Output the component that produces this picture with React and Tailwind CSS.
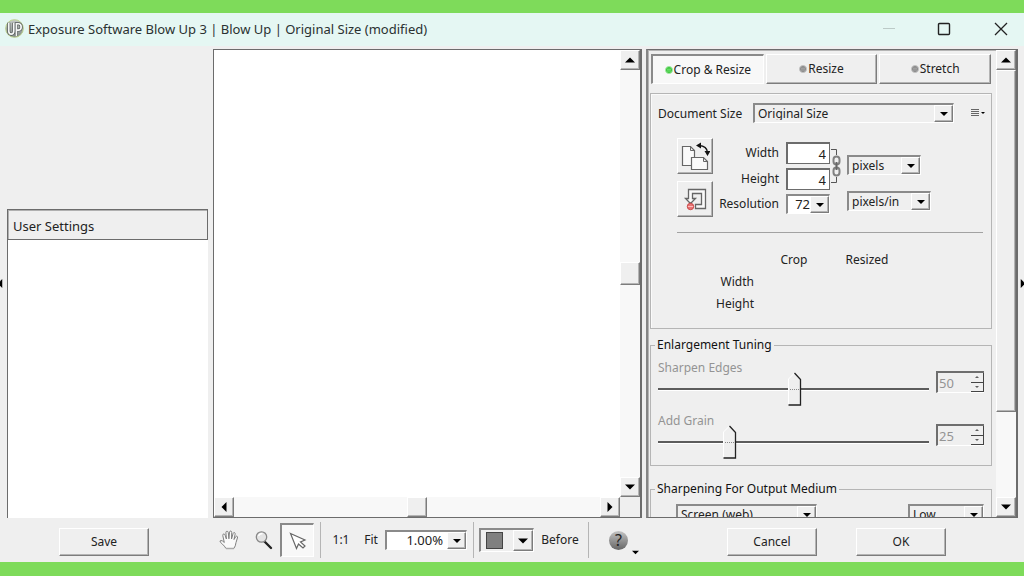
import { useState } from "react";

const raised = "bg-[#efefef] border border-t-white border-l-white border-r-[#7c7c7c] border-b-[#7c7c7c] shadow-[inset_-1px_-1px_0_#b4b4b4]";
const sunken = "border-t-2 border-l-2 border-r border-b border-t-[#8a8a8a] border-l-[#8a8a8a] border-r-white border-b-white";

const triangles = {
	up: "M6 3 L12 9 H0 Z",
	down: "M0 3 H12 L6 9 Z",
	left: "M9 0 V12 L3 6 Z",
	right: "M3 0 L9 6 L3 12 Z",
};

function Triangle({ dir = "down", className = "w-3 h-3" }) {
	return (
		<svg viewBox="0 0 12 12" className={className} aria-hidden="true">
			<path d={triangles[dir]} fill="#000" />
		</svg>
	);
}

function ArrowButton({ dir }) {
	return (
		<button aria-label={`Scroll ${dir}`} className={`w-5 h-5 shrink-0 flex items-center justify-center ${raised}`}>
			<Triangle dir={dir} className="w-[10px] h-[10px]" />
		</button>
	);
}

function DropDown({ label, options, className = "", textClass = "" }) {
	return (
		<div className={`relative flex h-5 ${sunken} ${className}`}>
			<select aria-label={label} className={`appearance-none bg-transparent w-full pl-[3px] leading-[17px] outline-none ${textClass}`}>
				{options.map((o) => (
					<option key={o}>{o}</option>
				))}
			</select>
			<span className={`absolute right-0 inset-y-0 w-[19px] flex items-center justify-center pointer-events-none ${raised}`}>
				<Triangle className="w-2 h-2" />
			</span>
		</div>
	);
}

function Combo({ id, label, value, className, inputClass = "" }) {
	return (
		<div className={`flex h-5 shrink-0 ${sunken} ${className}`}>
			<input id={id} aria-label={label} defaultValue={value} className={`min-w-0 flex-1 bg-white text-right text-[13px] leading-[17px] outline-none ${inputClass}`} />
			<button aria-label={`${label} presets`} className={`w-[19px] flex items-center justify-center ${raised}`}>
				<Triangle className="w-2 h-2" />
			</button>
		</div>
	);
}

function Tab({ label, active, onClick }) {
	return (
		<button
			role="tab"
			aria-selected={active}
			onClick={onClick}
			className={`flex-1 flex items-center justify-center gap-px ${active ? `bg-[#f8f8f8] pt-px ${sunken}` : raised}`}
		>
			<svg viewBox="0 0 8 8" className="w-2 h-2" aria-hidden="true">
				<circle cx="4" cy="4" r="3.5" fill={active ? "#35c435" : "#858585"} stroke={active ? "#a5e8a5" : "#c4c4c4"} />
				<path d="M2 3.2h4M2 5h4" stroke={active ? "#8df08d" : "#b5b5b5"} strokeWidth=".8" />
			</svg>
			{label}
		</button>
	);
}

function TuningSlider({ label, value, percent }) {
	return (
		<div className="flex h-[53px] pl-[7px] pr-[7px] text-[#949494]">
			<div className="flex-1">
				<label htmlFor={label} className="block h-[18px] leading-[18px]">{label}</label>
				<div className="relative h-[34px] -mt-[5px] flex items-center">
					<div className="w-full h-[3px] border-t-2 border-[#5c5c5c] border-b border-b-white"></div>
					<svg viewBox="0 0 14 34" className="absolute top-0 w-[14px] h-[34px]" style={{ left: `${percent}%` }} aria-hidden="true">
						<path d="M.5 33V7L6.5.5l6 6.5v26z" fill="#efefef" />
						<path d="M.5 33V7L6.5 1" fill="none" stroke="#fff" />
						<path d="M6.5 1l6 6.500v25.500H.5" fill="none" stroke="#222" strokeWidth="1.300" />
						<path d="M2 17.500h9" stroke="#888" strokeDasharray="1 1" />
					</svg>
					<input id={label} type="range" min="0" max="100" defaultValue={percent} disabled className="absolute inset-0 w-full h-full opacity-0" />
				</div>
			</div>
			<div className="flex w-12 h-[22px] ml-[7px] mt-3 border-t-2 border-l-2 border-[#6e6e6e] border-b border-b-white">
				<input aria-label={`${label} value`} defaultValue={value} disabled className="min-w-0 flex-1 pl-px text-[13px] leading-[18px]" />
				<div className="w-[13px] flex flex-col border-r border-[#444]">
					<button aria-label={`Increase ${label}`} disabled className="flex-1 flex items-center justify-center border-b border-[#444]">
						<Triangle dir="up" className="w-1 h-1 opacity-60" />
					</button>
					<button aria-label={`Decrease ${label}`} disabled className="flex-1 flex items-center justify-center border-b border-[#444]">
						<Triangle className="w-1 h-1 opacity-60" />
					</button>
				</div>
			</div>
		</div>
	);
}

function TitleBar() {
	return (
		<header className="h-[33px] shrink-0 flex items-center bg-[#e5f7f3] pl-[5px] pr-4 pb-[2px]">
			<svg viewBox="0 0 20 20" className="w-[19px] h-[19px]" aria-hidden="true">
				<defs>
					<linearGradient id="logo" x1="0" y1="0" x2="0" y2="1">
						<stop offset="0" stopColor="#c5cac8" />
						<stop offset="1" stopColor="#848c8a" />
					</linearGradient>
				</defs>
				<circle cx="10" cy="10" r="9.300" fill="url(#logo)" stroke="#b9cf86" />
				<path d="M4 4v9q0 3 2.600 3t2.600-3V4M12 18V5h2q3 0 3 3.300t-3 3.300h-2" fill="none" stroke="#4f5555" strokeWidth="3.200" />
				<path d="M4 4v9q0 3 2.600 3t2.600-3V4M12 18V5h2q3 0 3 3.300t-3 3.300h-2" fill="none" stroke="#f4f6f6" strokeWidth="1.800" />
			</svg>
			<h1 className="flex-1 ml-1 text-[13px] leading-5 whitespace-nowrap text-[#2a3131]">
				Exposure Software Blow Up 3 | Blow Up | Original Size (modified)
			</h1>
			<button aria-label="Minimize" className="w-[14px] h-[14px] mr-[41px]">
				<svg viewBox="0 0 14 14"><path d="M1 6.500h12" stroke="#bccac7" /></svg>
			</button>
			<button aria-label="Maximize" className="w-[14px] h-[14px] mr-[43px]">
				<svg viewBox="0 0 14 14"><rect x="1.500" y="1.500" width="11" height="11" rx="1" fill="none" stroke="#222" strokeWidth="1.400" /></svg>
			</button>
			<button aria-label="Close" className="w-[14px] h-[14px]">
				<svg viewBox="0 0 14 14"><path d="M1 1l12 12M13 1L1 13" stroke="#222" strokeWidth="1.300" /></svg>
			</button>
		</header>
	);
}

function UserSettings() {
	return (
		<aside className="w-[213px] shrink-0 flex">
			<div className="w-[7px] flex items-center">
				<Triangle dir="left" className="w-[10px] h-[9px] -ml-[5px]" />
			</div>
			<div className="w-[201px] pt-40 flex flex-col">
				<div className="h-[31px] shrink-0 flex items-center pl-[5px] pt-1 text-[13px] border border-[#6c6c6c] shadow-[inset_1px_1px_0_#b0b0b0]">User Settings</div>
				<div className="flex-1 bg-white border-l border-[#6c6c6c]"></div>
			</div>
		</aside>
	);
}

function Preview() {
	return (
		<main className="flex-1 mr-1 flex flex-col bg-white border border-r-2 border-[#6c6c6c]">
			<div className="flex-1 flex justify-end">
				<div className="w-5 flex flex-col bg-[#f8f8f8]">
					<ArrowButton dir="up" />
					<div className="flex-1 flex items-center">
						<div className={`w-full h-[23px] ${raised}`}></div>
					</div>
					<ArrowButton dir="down" />
				</div>
			</div>
			<div className="h-5 flex bg-[#f8f8f8]">
				<ArrowButton dir="left" />
				<div className="flex-1 flex justify-center">
					<div className={`h-full w-5 ${raised}`}></div>
				</div>
				<ArrowButton dir="right" />
				<div className="w-5 bg-[#efefef]"></div>
			</div>
		</main>
	);
}

function DocumentSize() {
	return (
		<section className="h-[236px] shrink-0 mt-[9px] border border-[#b5b5b5] shadow-[inset_1px_1px_0_#fafafa]">
			<div className="flex items-center mt-2 h-[22px] pl-[7px] pr-[6px]">
				<span className="w-[95px] pt-px">Document Size</span>
				<DropDown label="Document Size" options={["Original Size", "Custom"]} className="flex-1" textClass="[clip-path:inset(0_0_2px_0)]" />
				<button aria-label="Document presets" className="ml-[17px] flex items-center gap-[2px]">
					<svg viewBox="0 0 8 8" className="w-2 h-2"><path d="M0 .5h8M0 2.500h8M0 4.500h8M0 6.500h8" stroke="#666" strokeWidth="1.200" /></svg>
					<Triangle className="w-1 h-1" />
				</button>
			</div>
			<div className="flex mt-[14px] pl-[26px] h-20">
				<div className="w-9 flex flex-col gap-[7px]">
					<button aria-label="Swap orientation" className={`h-9 flex items-center justify-center ${raised}`}>
						<svg viewBox="0 0 30 30" className="w-[30px] h-[30px]" fill="#fafafa" stroke="#666">
							<path d="M2.500 5.500h8l4 4v15h-12z" strokeWidth="1.200" />
							<path d="M10.500 5.500v4h4" fill="none" />
							<path d="M11.500 16.500h12l4 4v8h-16z" strokeWidth="1.200" />
							<path d="M23.500 16.500v4h4" fill="none" />
							<path d="M19 4.500q8 .5 8.500 7" fill="none" stroke="#111" strokeWidth="1.400" />
							<path d="M16 4.500l5-3v6zM24.500 10h6l-3 5z" fill="#111" stroke="none" />
						</svg>
					</button>
					<button aria-label="Reset size" className={`h-9 flex items-center justify-center ${raised}`}>
						<svg viewBox="0 0 30 30" className="w-[30px] h-[30px]">
							<path d="M8.500 5.500h17v19h-10v-4h6v-11h-9v5h3l-5 5-5-5h3z" fill="#fafafa" stroke="#666" strokeWidth="1.300" />
							<circle cx="10.500" cy="22.500" r="3.200" fill="#e87474" stroke="#c84a4a" />
							<path d="M8 22.500h5" stroke="#fbb" />
						</svg>
					</button>
				</div>
				<div className="w-[66px] flex flex-col text-right leading-[26px] pt-[2px] whitespace-nowrap">
					<label htmlFor="width">Width</label>
					<label htmlFor="height">Height</label>
					<label htmlFor="resolution" className="leading-6">Resolution</label>
				</div>
				<div className="w-11 ml-[7px] mt-1 flex flex-col gap-1">
					<input id="width" defaultValue="4" className="h-[22px] bg-white border-2 border-b border-r border-[#6c6c6c] text-right text-[13px] pr-[3px]" />
					<input id="height" defaultValue="4" className="h-[22px] bg-white border-2 border-b border-r border-[#6c6c6c] text-right text-[13px] pr-[3px]" />
					<Combo id="resolution" label="Resolution" value="72" className="w-full" />
				</div>
				<svg viewBox="0 0 10 36" className="w-[10px] h-9 mt-[10px] ml-px" fill="none" aria-hidden="true">
					<path d="M0 1.500h5.500V7M0 34.500h5.500V29" stroke="#555" />
					<rect x="2.500" y="8.500" width="6" height="8" rx="3" stroke="#808080" strokeWidth="2" />
					<rect x="2.500" y="19.500" width="6" height="8" rx="3" stroke="#808080" strokeWidth="2" />
					<path d="M5.500 14v8" stroke="#666" strokeWidth="2" />
				</svg>
				<div className="ml-[6px] mt-[17px] flex flex-col gap-4">
					<DropDown label="Size units" options={["pixels", "inches", "cm"]} className="w-[74px]" />
					<DropDown label="Resolution units" options={["pixels/in", "pixels/cm"]} className="w-[84px]" />
				</div>
			</div>
			<hr className="mt-[14px] ml-[26px] mr-2 border-[#a2a2a2]" />
			<table className="table-fixed w-[223px] ml-[26px] mt-4 leading-[22px]">
				<thead>
					<tr>
						<td className="w-[77px]"></td>
						<th scope="col" className="w-20 p-0 font-normal text-center">Crop</th>
						<th scope="col" className="w-[66px] p-0 font-normal text-center">Resized</th>
					</tr>
				</thead>
				<tbody>
					{["Width", "Height"].map((row) => (
						<tr key={row}>
							<th scope="row" className="p-0 font-normal text-right">{row}</th>
							<td></td>
							<td></td>
						</tr>
					))}
				</tbody>
			</table>
		</section>
	);
}

function Controls() {
	const [tab, setTab] = useState("Crop & Resize");

	return (
		<aside className="w-[372px] shrink-0 flex border-2 border-t border-b border-[#6c6c6c] border-l-[#858585] shadow-[inset_1px_1px_0_#b5b5b5]">
			<div className="flex-1 min-w-0 min-h-0 flex flex-col overflow-hidden pl-[2px] pr-1 pt-1">
				<div role="tablist" className="h-[30px] shrink-0 flex gap-[2px] pl-px pr-px">
					{["Crop & Resize", "Resize", "Stretch"].map((name) => (
						<Tab key={name} label={name} active={tab === name} onClick={() => setTab(name)} />
					))}
				</div>
				<DocumentSize />
				<fieldset className="shrink-0 mt-[7px] border border-[#b5b5b5]">
					<legend className="ml-1 px-[2px] leading-[18px] text-[#111]">Enlargement Tuning</legend>
					<div className="pt-[5px]">
						<TuningSlider label="Sharpen Edges" value="50" percent={48} />
						<TuningSlider label="Add Grain" value="25" percent={24} />
					</div>
				</fieldset>
				<fieldset className="shrink-0 mt-[14px] border border-[#b5b5b5]">
					<legend className="ml-1 px-[2px] leading-[18px] text-[#111]">Sharpening For Output Medium</legend>
					<div className="flex justify-between pt-[6px] pb-2 pl-[25px] pr-[7px]">
						<DropDown label="Output medium" options={["Screen (web)", "Glossy paper", "Matte paper"]} className="w-[141px]" />
						<DropDown label="Amount" options={["Low", "Medium", "High"]} className="w-[76px]" />
					</div>
				</fieldset>
			</div>
			<div className="w-5 flex flex-col bg-[#f8f8f8]">
				<ArrowButton dir="up" />
				<div className="flex-1">
					<div className={`h-4/5 ${raised}`}></div>
				</div>
				<ArrowButton dir="down" />
			</div>
		</aside>
	);
}

function HandIcon() {
	return (
		<svg viewBox="0 0 20 20" className="w-5 h-5" aria-hidden="true">
			<path
				d="M7 18.500Q5.500 16 3.500 14.200L1.200 12Q.6 10.600 2 10.500q1.500 0 3.300 2L3.800 5.600Q3.600 4 4.800 4q1 0 1.400 1.400L7.400 9 6.900 2.600Q7 1.200 8 1.200t1.300 1.400l.6 6.200.6-6.700Q10.800.9 11.800 1q1 .2.9 1.500l-.2 6.500 1.600-5.500q.5-1.200 1.400-.9t.6 1.700L15 9.500l1.600-2.700q.7-1 1.500-.5t.3 1.700L17 12.500q-.4 3.700-2.200 6z"
				fill="#fafafa"
				stroke="#808080"
			/>
			<path d="M7 18.500h7.800" stroke="#aaa" strokeWidth="1.500" />
		</svg>
	);
}

function Footer() {
	return (
		<footer className="h-11 shrink-0 flex">
			<div className="w-[213px] shrink-0 pl-[59px] pt-[10px]">
				<button className={`w-[90px] h-7 ${raised}`}>Save</button>
			</div>
			<div className="flex-1 flex items-center pl-[6px]">
				<button aria-label="Pan" className="w-5"><HandIcon /></button>
				<button aria-label="Zoom" className="ml-4 w-[18px]">
					<svg viewBox="0 0 18 20" className="w-[18px] h-5" aria-hidden="true">
						<path d="M9.500 11.500l6.500 6.500" stroke="#222" strokeWidth="2.400" strokeLinecap="round" />
						<circle cx="6.500" cy="7" r="5.200" fill="#e4e4e4" stroke="#888" strokeWidth="1.300" />
						<path d="M3.500 6q1-2.500 4-2.500" fill="none" stroke="#fff" strokeWidth="1.300" />
					</svg>
				</button>
				<button aria-label="Select" className={`ml-[7px] w-[34px] h-[34px] flex items-center justify-center bg-[#f8f8f8] ${sunken}`}>
					<svg viewBox="0 0 18 18" className="w-[18px] h-[18px]" aria-hidden="true">
						<path d="M1.500 1.500l14.500 6.500-4.500 2 4.500 4-2 2-4.500-4-2 4.500z" fill="#fff" stroke="#666" strokeWidth="1.200" />
					</svg>
				</button>
				<span className="ml-[6px] w-px h-9 bg-[#b5b5b5]"></span>
				<button className="ml-[10px] w-5">1:1</button>
				<button className="ml-3 w-4">Fit</button>
				<Combo label="Zoom level" value="1.00%" className="ml-[6px] w-[82px]" inputClass="pr-1" />
				<span className="ml-[6px] w-px h-9 bg-[#b5b5b5]"></span>
				<button aria-label="Background color" className={`ml-[5px] w-[55px] h-6 shrink-0 pl-[5px] flex items-center justify-between ${sunken}`}>
					<span className="w-[17px] h-[17px] bg-[#808080] border border-[#444]"></span>
					<span className={`w-5 h-full flex items-center justify-center ${raised}`}>
						<Triangle className="w-[10px] h-[10px]" />
					</span>
				</button>
				<button className="ml-[6px] w-10">Before</button>
				<span className="ml-2 w-px h-9 bg-[#b5b5b5]"></span>
				<button aria-label="Help" className="ml-5 flex items-end shrink-0">
					<span className="w-[19px] h-[19px] rounded-full bg-linear-to-b from-[#c4c4c4] to-[#666] text-[16px] leading-[19px] text-[#222] text-center">?</span>
					<Triangle className="w-[7px] h-[7px] ml-1 -mb-[6px]" />
				</button>
			</div>
			<div className="w-[378px] shrink-0 flex gap-[39px] pl-[81px] pt-[10px]">
				<button className={`w-[90px] h-7 ${raised}`}>Cancel</button>
				<button className={`w-[90px] h-7 ${raised}`}>OK</button>
			</div>
		</footer>
	);
}

export default function App() {
	return (
		<div className="h-screen flex flex-col bg-[#efefef] font-['Noto_Sans',sans-serif] text-[12px] text-[#222]">
			<div className="h-[13px] shrink-0 bg-[#7edb5a]"></div>
			<TitleBar />
			<div className="flex-1 min-h-0 flex pt-[3px]">
				<UserSettings />
				<Preview />
				<Controls />
				<div className="w-[6px] flex items-center overflow-hidden">
					<Triangle dir="right" className="w-[10px] h-[9px] shrink-0" />
				</div>
			</div>
			<Footer />
			<div className="h-[14px] shrink-0 bg-[#7edb5a]"></div>
		</div>
	);
}
